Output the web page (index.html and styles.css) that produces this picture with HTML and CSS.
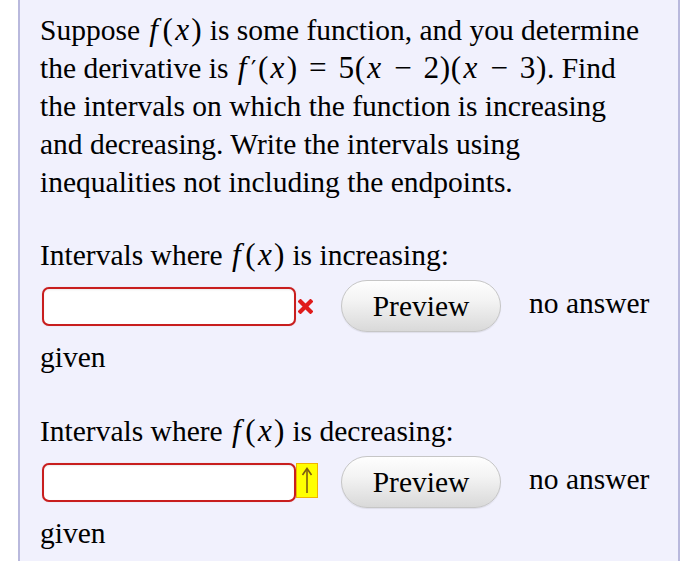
FILE: index.html
```html
<!DOCTYPE html>
<html lang="en">
<head>
<meta charset="utf-8">
<title>Problem</title>
<link rel="stylesheet" href="styles.css">
</head>
<body>
<div class="problem">
  <p class="question">Suppose <span class="m"><i class="vf">f</i>(<i class="vx">x</i>)</span> is some function, and you determine the derivative is <span class="m"><i class="vf">f</i><span class="prime">′</span>(<i class="vx">x</i>)<span class="rel">=</span>5(<i class="vx">x</i><span class="bin">−</span>2)(<i class="vx">x</i><span class="bin">−</span>3)</span>. Find the intervals on which the function is increasing and decreasing. Write the intervals using inequalities not including the endpoints.</p>

  <div class="part">
    <p class="label">Intervals where <span class="m"><i class="vf">f</i>(<i class="vx">x</i>)</span> is increasing:</p>
    <div class="row"><span class="answer"><input class="ans" type="text"><span class="fb fb-wrong"><svg width="15" height="15" viewBox="0 0 15 15"><path d="M2.5 2.5 L12.5 12.5 M12.5 2.5 L2.5 12.5" stroke="#e01b1b" stroke-width="4.2" stroke-linecap="square"/></svg></span></span><button class="preview" type="button">Preview</button><span class="status">no answer given</span></div>
  </div>

  <div class="part">
    <p class="label">Intervals where <span class="m"><i class="vf">f</i>(<i class="vx">x</i>)</span> is decreasing:</p>
    <div class="row"><span class="answer"><input class="ans" type="text"><span class="fb fb-focus"><svg width="20" height="33" viewBox="0 0 20 33"><path d="M10 5 L10 29" stroke="#7d5b12" stroke-width="1.6"/><path d="M5.5 11 L10 4.5 L14.5 11" fill="none" stroke="#7d5b12" stroke-width="1.6"/></svg></span></span><button class="preview" type="button">Preview</button><span class="status">no answer given</span></div>
  </div>
</div>
</body>
</html>
```
FILE: styles.css
```css
html, body {
  margin: 0;
  padding: 0;
  background: #ffffff;
}

body {
  font-family: "Liberation Serif", "Times New Roman", serif;
  font-size: 29.5px;
  color: #000;
}

.problem {
  margin-left: 18px;
  width: 612px;
  padding: 11px 26px 40px 20px;
  background: #f1f1fd;
  border-left: 2px solid #b9b9dd;
  border-right: 2px solid #b9b9dd;
  min-height: 600px;
}

.question {
  margin: 0 0 35px 0;
  line-height: 38px;
}

.part + .part {
  margin-top: 36px;
}

.label {
  margin: 0;
  line-height: 38px;
}

.m {
  white-space: nowrap;
  font-size: 1.06em;
  line-height: 1;
  letter-spacing: 0.02em;
}

.m i {
  font-style: italic;
}

.vf {
  padding: 0 0.13em 0 0.06em;
}

.vx {
  padding: 0 0.05em;
}

.prime {
  font-family: "DejaVu Serif", "Liberation Serif", serif;
  font-size: 0.75em;
  margin-left: 0;
  margin-right: 0.04em;
}

.rel {
  margin: 0 0.36em;
}

.bin {
  margin: 0 0.35em;
}

.row {
  line-height: 38px;
}

.answer {
  display: inline-flex;
  align-items: flex-start;
  vertical-align: middle;
  margin-left: 2px;
  width: 278px;
  height: 39px;
}

.ans {
  box-sizing: border-box;
  width: 254px;
  height: 39px;
  margin: 0;
  padding: 0 8px;
  border: 2px solid #c81e1e;
  border-radius: 7px;
  background: #ffffff;
  box-shadow: inset 0 1px 2px rgba(0, 0, 0, 0.08), 0 0 1px rgba(200, 0, 0, 0.3);
  font: inherit;
  outline: none;
}

.fb {
  display: flex;
  align-items: center;
  justify-content: center;
}

.fb-wrong {
  width: 16px;
  height: 39px;
  margin-left: 1px;
}

.fb-focus {
  box-sizing: border-box;
  width: 22px;
  height: 35px;
  background: #ffff00;
  border: 1px solid #f0b400;
}

.preview {
  box-sizing: border-box;
  width: 160px;
  height: 52px;
  vertical-align: middle;
  margin: 6px 0 6px 21px;
  padding: 0;
  border: 1px solid #c6c6c6;
  border-radius: 26px;
  background: linear-gradient(#fefefe, #f3f3f3 40%, #d9d9d9);
  box-shadow: 0 1px 1px rgba(0, 0, 0, 0.08);
  font: inherit;
  line-height: 34px;
  color: #000;
}

.status {
  margin-left: 28px;
}
```
